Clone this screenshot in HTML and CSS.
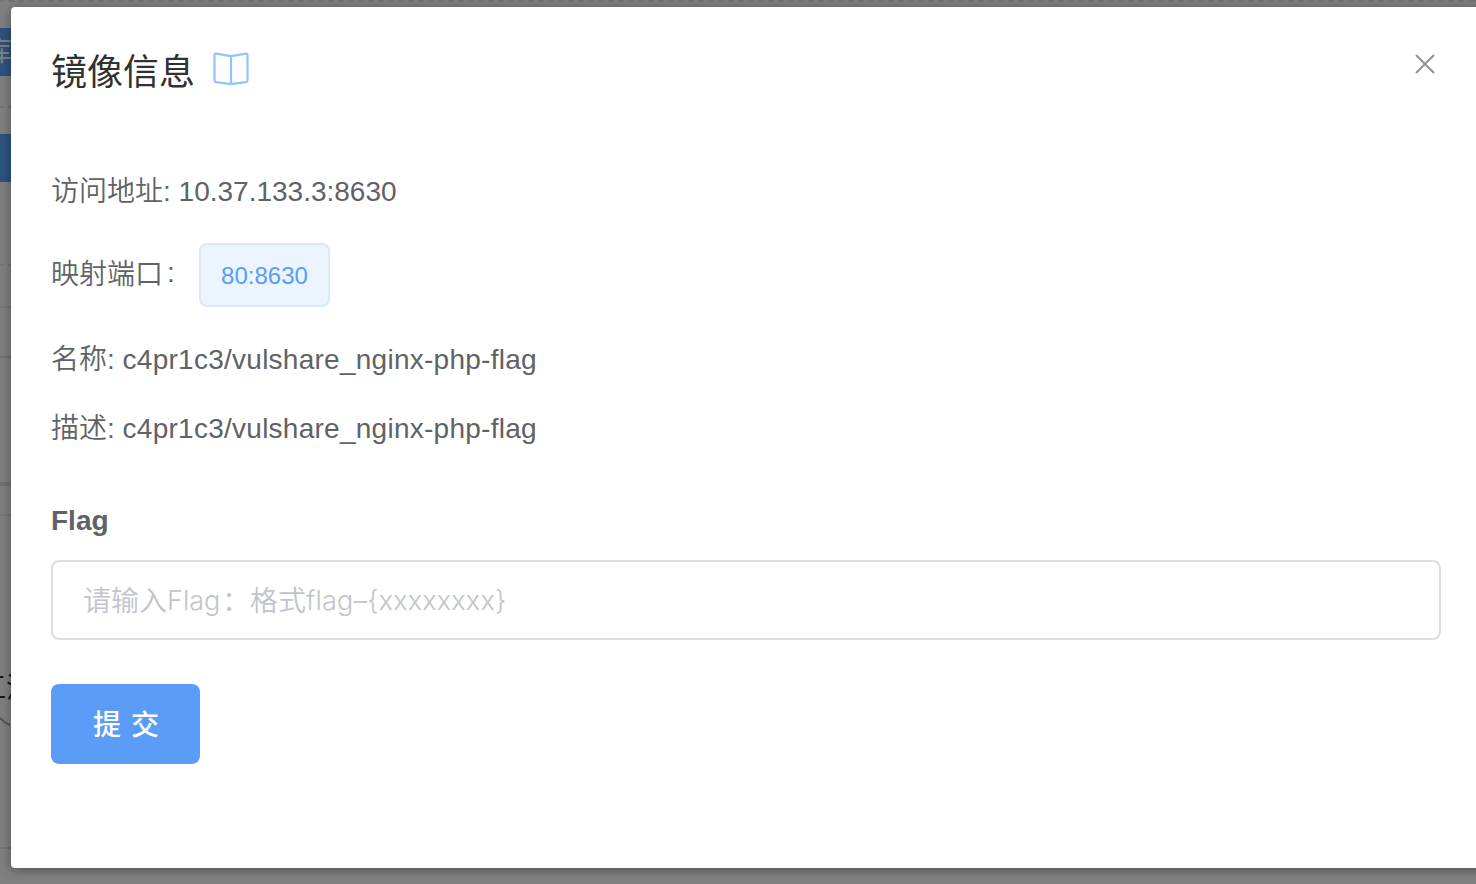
FILE: index.html
```
<!DOCTYPE html>
<html lang="zh-CN">
<head>
<meta charset="utf-8">
<title>镜像信息</title>
<link rel="stylesheet" href="styles.css">
</head>
<body>
<div class="page">
  <div class="dash first"></div>
  <div class="nav-button">库</div>
  <div class="dash second"></div>
  <div class="nav-button plain"></div>
  <div class="dash third"></div>
  <div class="rule top"></div>
  <div class="rule header"></div>
  <div class="rule thick"></div>
  <div class="rule body"></div>
  <div class="card-name">江流</div>
  <svg class="card-arrow" viewBox="0 0 11 11"><path d="M0 1L5 5.500L10 8"/></svg>
  <div class="rule bottom"></div>
</div>
<main class="dialog">
  <header class="dialog-header">
    <h1 class="title">镜像信息</h1>
    <svg class="book" viewBox="0 0 38 36"><path d="M2.500 4Q2.500 2.500 4 2.700L19 5.200L34 2.700Q35.500 2.500 35.500 4V29.500Q35.500 31 34 31.200L19 33.200L4 31.200Q2.500 31 2.500 29.500ZM19 5.200V33.200"/></svg>
    <svg class="close" viewBox="0 0 22 22"><path d="M2 2L20 20M20 2L2 20"/></svg>
  </header>
  <p class="row address"><span>访问地址:</span> <span>10.37.133.3:8630</span></p>
  <div class="row ports"><span class="ports-label">映射端口<span class="colon">:</span></span><span class="tag">80:8630</span></div>
  <p class="row name"><span>名称:</span> <span class="image">c4pr1c3/vulshare_nginx-php-flag</span></p>
  <p class="row desc"><span>描述:</span> <span class="image">c4pr1c3/vulshare_nginx-php-flag</span></p>
  <div class="flag-label">Flag</div>
  <div class="flag-input"><span>请输入</span><span class="latin word">Flag</span><span>：格式</span><span class="latin pattern">flag–{xxxxxxxx}</span></div>
  <button class="submit">提 交</button>
</main>
</body>
</html>
```
FILE: styles.css
```
* { box-sizing: border-box; }
body {
  margin: 0;
  width: 1476px;
  height: 884px;
  overflow: hidden;
  position: relative;
  background: #808080;
  font-family: "Liberation Sans", "Noto Sans CJK SC", sans-serif;
  color: #606266;
}
.page { display: flex; flex-direction: column; height: 884px; }
.dash {
  height: 2px;
  flex: none;
  background: repeating-linear-gradient(90deg, #70757b 0 6px, transparent 6px 10px);
  background-position-x: -2px;
}
.dash.second { margin-top: 30px; }
.dash.third { margin-top: 82px; }
.nav-button {
  flex: none;
  width: 60px;
  height: 48px;
  margin-top: 26px;
  background: #2c5380;
  color: #808080;
  font-size: 28px;
  line-height: 48px;
  text-indent: -16px;
}
.rule { flex: none; height: 2px; background: #71727a; }
.rule.top { margin-top: 40px; background: #77777f; }
.rule.header { margin-top: 48px; }
.rule.thick { margin-top: 124px; height: 4px; background: #707274; }
.rule.body { margin-top: 28px; background: #76777f; }
.card-name {
  height: 36px;
  margin-top: 155px;
  font-size: 28px;
  line-height: 36px;
  text-indent: -22px;
  color: #181818;
  white-space: nowrap;
}
.card-arrow { width: 11px; height: 11px; margin-top: 10px; fill: none; stroke: #505153; stroke-width: 1.800; }
.rule.bottom { margin-top: 119px; }
.dialog {
  position: absolute;
  left: 11px;
  top: 7px;
  width: 1480px;
  height: 861px;
  padding: 39px 50px 0 40px;
  display: flex;
  flex-direction: column;
  align-items: flex-start;
  background: #fff;
  border-radius: 4px;
  box-shadow: 0 2px 12px rgba(0, 0, 0, .38);
}
.dialog-header { display: flex; width: 1390px; height: 50px; align-items: flex-start; }
.title { margin: 2px 0 0; font-size: 36px; font-weight: 400; line-height: 50px; color: #303133; }
.book { width: 38px; height: 36px; margin: 5px 0 0 17px; fill: none; stroke: #94c2fc; stroke-width: 2.200; stroke-linejoin: round; }
.close { width: 22px; height: 22px; margin: 7px 5px 0 auto; fill: none; stroke: #909399; stroke-width: 2; }
.row { margin: 0; font-size: 28px; font-weight: 350; line-height: 40px; white-space: nowrap; }
.address { margin-top: 76px; }
.ports { display: flex; align-items: center; height: 64px; margin-top: 31px; }
.ports-label { width: 148px; }
.colon { margin-left: 4px; position: relative; top: -2px; }
.tag {
  width: 131px;
  height: 64px;
  border: 2px solid #d9e8fe;
  border-radius: 8px;
  background: #ecf4ff;
  color: #5a9cf8;
  font-size: 24px;
  line-height: 62px;
  text-align: center;
}
.name { margin-top: 33px; }
.desc { margin-top: 29px; }
.image { letter-spacing: .26px; }
.flag-label { margin-top: 52px; font-size: 28px; line-height: 40px; font-weight: 700; }
.flag-input {
  display: flex;
  width: 1390px;
  height: 80px;
  margin-top: 19px;
  padding: 0 30px;
  border: 2px solid #dcdee4;
  border-radius: 8px;
  background: #fff;
  color: #c0c4cc;
  font: 350 28px/75px "Noto Sans CJK SC", sans-serif;
  white-space: nowrap;
}
.latin { font-family: Inter, "Liberation Sans", sans-serif; font-size: 27px; line-height: 77px; }
.word { width: 55px; }
.pattern { letter-spacing: .2px; }
.submit {
  width: 149px;
  height: 80px;
  margin-top: 44px;
  padding: 0 0 2px 2px;
  border: 0;
  border-radius: 8px;
  background: #5a9cf8;
  color: #fff;
  font: 500 28px "Liberation Sans", "Noto Sans CJK SC", sans-serif;
  letter-spacing: 1px;
}
```
